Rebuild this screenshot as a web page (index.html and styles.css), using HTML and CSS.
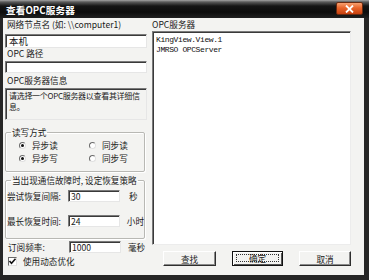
FILE: index.html
```html
<!DOCTYPE html>
<html lang="zh">
<head>
<meta charset="utf-8">
<title>查看OPC服务器</title>
<link rel="stylesheet" href="styles.css">
</head>
<body>
<div class="window">
  <div class="titlebar">
    <span class="title">查看OPC服务器</span>
    <span class="close"><svg width="9" height="8" viewBox="0 0 9 8"><path d="M1 0.5 L8 7.5 M8 0.5 L1 7.5" stroke="#fff" stroke-width="1.8"/></svg></span>
  </div>
  <div class="client">
    <div class="left">
      <div class="label l1">网络节点名 (如: \\computer1)</div>
      <div class="input in1">本机</div>
      <div class="label">OPC 路径</div>
      <div class="input in2"></div>
      <div class="label l3">OPC服务器信息</div>
      <div class="info"><div class="ln">请选择一个OPC服务器以查看其详细信</div><div class="ln">息。</div></div>
      <fieldset class="group g1">
        <legend>读写方式</legend>
        <div class="radios">
          <span class="opt"><span class="radio on"></span>异步读</span>
          <span class="opt"><span class="radio"></span>同步读</span>
          <span class="opt"><span class="radio on"></span>异步写</span>
          <span class="opt"><span class="radio"></span>同步写</span>
        </div>
      </fieldset>
      <fieldset class="group g2">
        <legend>当出现通信故障时, 设定恢复策略</legend>
        <div class="row r1"><span class="rl">尝试恢复间隔:</span><span class="input num">30</span><span class="unit u1">秒</span></div>
        <div class="row r2"><span class="rl">最长恢复时间:</span><span class="input num">24</span><span class="unit">小时</span></div>
      </fieldset>
      <div class="row freq"><span class="rl">订阅频率:</span><span class="input num">1000</span><span class="unit">毫秒</span></div>
      <div class="check"><span class="cbox"><svg width="9" height="9" viewBox="0 0 9 9"><path d="M1.5 4 L3.5 6.2 L7.5 1.8" fill="none" stroke="#111" stroke-width="1.6"/></svg></span>使用动态优化</div>
    </div>
    <div class="right">
      <div class="label rlab">OPC服务器</div>
      <div class="list">
        <div>KingView.View.1</div>
        <div>JMRSO OPCServer</div>
      </div>
      <div class="buttons">
        <span class="btn b1">查找</span>
        <span class="btn def"><span class="focus">确定</span></span>
        <span class="btn b3">取消</span>
      </div>
    </div>
  </div>
</div>
</body>
</html>
```
FILE: styles.css
```css
html, body { margin: 0; padding: 0; }
body {
  width: 369px; height: 280px; overflow: hidden;
  font-family: "Noto Sans CJK SC", "Noto Sans", sans-serif;
  font-size: 8.6px; color: #1a1a1a;
  background: #fff;
}
.window {
  width: 369px; height: 280px; box-sizing: border-box;
  background: #262626;
  display: flex; flex-direction: column;
}
.titlebar {
  height: 18px; flex: none;
  background: linear-gradient(#a4a4a4 0, #5a5a5a 2px, #151515 6px, #0c0c0c 12px, #202020 18px);
  display: flex; align-items: center; justify-content: space-between;
  padding: 0 6px 0 6px;
}
.title { color: #fff; font-weight: bold; font-size: 9.6px; letter-spacing: 0.1px; margin-top: 1px; }
.close {
  width: 27px; height: 13px; margin-top: -1px;
  border-radius: 2px;
  background: linear-gradient(#f7a070, #e8642a 45%, #c8400e);
  border: 1px solid #6a2a10;
  box-sizing: border-box;
  display: flex; align-items: center; justify-content: center;
}
.client {
  flex: 1; margin: 0 5px 5px 3px;
  background: #f3f3f1;
  display: flex; padding-left: 2px;
}
.left { width: 142px; display: flex; flex-direction: column; }
.right { width: 199px; margin-left: 5px; display: flex; flex-direction: column; }
.label { height: 10px; line-height: 10px; white-space: nowrap; padding-left: 2px; }
.l1 { margin-top: 1px; }
.input {
  background: #fff; box-sizing: border-box;
  border: 1px solid; border-color: #7a7a7a #e6e6e6 #e6e6e6 #7a7a7a;
  box-shadow: inset 1px 1px #3a3a3a;
  line-height: 10px; padding-left: 3px; white-space: nowrap;
}
.in1 { margin-top: 5px; height: 14px; line-height: 12px; font-size: 9.4px; }
.in2 { margin-top: 3px; height: 12px; }
.l3 { margin-top: 2px; }
.info {
  margin-top: 3px; height: 32px; box-sizing: border-box;
  border: 1px solid; border-color: #7a7a7a #e6e6e6 #e6e6e6 #7a7a7a;
  box-shadow: inset 1px 1px #3a3a3a;
  padding: 1px 0 0 3px;
  display: flex; flex-direction: column;
}
.ln {
  height: 11px; line-height: 11px; white-space: nowrap;
  font-size: 8px; letter-spacing: -0.3px;
}
.group {
  margin: 0; padding: 0; box-sizing: border-box;
  border: 1px solid #b8b8b4; border-radius: 2px;
  box-shadow: 1px 1px #fff, inset 1px 1px #fff;
  min-width: 0; width: 140px;
}
.group legend {
  padding: 0 1px; margin-left: 5px;
  line-height: 10px; height: 10px; white-space: nowrap;
}
.g1 { margin-top: 7px; height: 45px; }
.radios {
  display: grid; grid-template-columns: 70px 60px;
  row-gap: 3px; padding: 3px 0 0 13px;
}
.opt { display: flex; align-items: center; height: 10px; line-height: 10px; white-space: nowrap; }
.radio {
  width: 7px; height: 7px; border-radius: 50%;
  background: #fff; box-sizing: border-box;
  border: 1px solid; border-color: #6a6a6a #e0e0e0 #e0e0e0 #6a6a6a;
  margin-right: 6px;
  display: inline-flex; align-items: center; justify-content: center;
}
.radio.on::after { content: ""; width: 3px; height: 3px; border-radius: 50%; background: #111; }
.g2 { margin-top: 3px; height: 64px; }
.row { display: flex; align-items: center; white-space: nowrap; }
.rl { width: 61px; padding-left: 1px; }
.num { width: 52px; height: 12px; padding-left: 2px; }
.unit { margin-left: 7px; }
.u1 { margin-left: 9px; }
.r1 { margin-top: 5px; }
.r2 { margin-top: 13px; }
.freq { margin-top: 2px; padding-left: 2px; }
.freq .rl { width: 61px; }
.check { display: flex; align-items: center; margin-top: 3px; padding-left: 3px; height: 10px; line-height: 10px; white-space: nowrap; }
.cbox {
  width: 9px; height: 9px; box-sizing: border-box; background: #fff;
  border: 1px solid; border-color: #6a6a6a #e0e0e0 #e0e0e0 #6a6a6a;
  margin-right: 6px; display: inline-flex;
}
.cbox svg { margin: -1px; }
.rlab { margin-top: 1px; padding-left: 0; }
.list {
  margin-top: 2px; height: 214px; box-sizing: border-box;
  background: #fff;
  border: 1px solid; border-color: #7a7a7a #ececec #ececec #7a7a7a;
  box-shadow: inset 1px 1px #3a3a3a;
  padding: 3px 0 0 3px;
  font-family: "Liberation Mono", monospace; font-size: 8px; letter-spacing: -0.4px;
  line-height: 10px; color: #111;
}
.buttons {
  margin-top: 6px; height: 15px;
  display: flex; justify-content: space-between; padding-left: 11px;
}
.btn {
  height: 15px; box-sizing: border-box;
  border: 1px solid; border-color: #fff #2e2e2e #2e2e2e #fff;
  box-shadow: inset -1px -1px #8a8a8a;
  display: flex; align-items: center; justify-content: center;
  line-height: 10px;
}
.b1 { width: 53px; }
.b3 { width: 52px; }
.def { width: 51px; border-color: #111; box-shadow: inset 1px 1px #fff, inset -1px -1px #555; padding: 2px 3px 3px 3px; }
.focus { flex: 1; height: 100%; box-sizing: border-box; border: 1px dotted #333; display: flex; align-items: center; justify-content: center; }
```
